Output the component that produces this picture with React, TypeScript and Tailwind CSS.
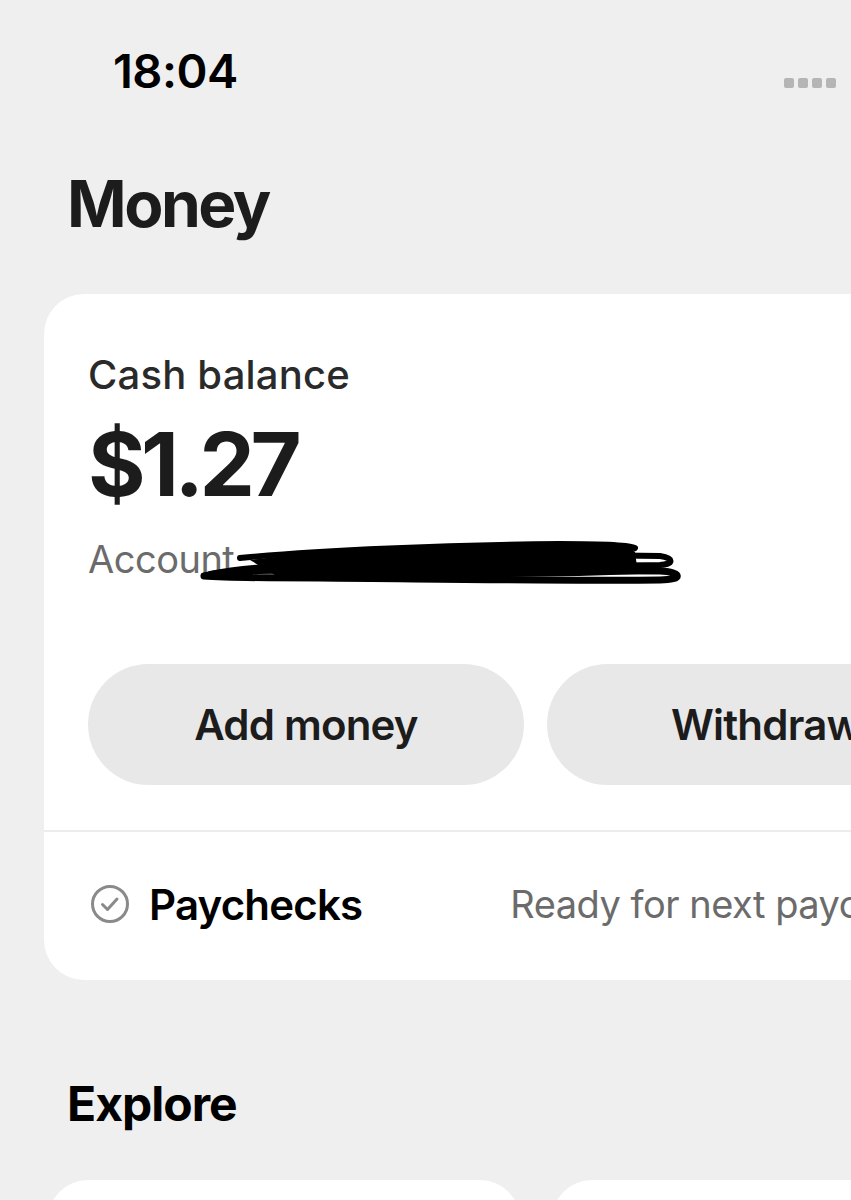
import React from "react";

function Scribble() {
  return (
    <svg
      className="absolute left-[190px] top-[530px]"
      width="500"
      height="60"
      viewBox="0 0 500 60"
      fill="none"
    >
      <path d="M60 30 C150 18 300 14 440 16 L445 22 L448 44 C360 48 200 48 90 48 Z" fill="#000" />
      <path d="M50 28 C130 20 260 15 370 14 C410 14 440 15 445 18" stroke="#000" strokeWidth="6" strokeLinecap="round" />
      <path d="M140 34 C250 26 360 24 470 26 C484 28 484 34 470 35 C400 36 320 36 260 38" stroke="#000" strokeWidth="6" strokeLinecap="round" />
      <path d="M14 46 C40 40 80 40 120 40 C250 40 380 40 470 41 C492 42 494 50 470 50 C380 51 250 49 130 48 C80 48 40 48 14 46" stroke="#000" strokeWidth="7" strokeLinecap="round" />
      <path d="M20 44 C60 36 110 34 160 33" stroke="#000" strokeWidth="6" strokeLinecap="round" />
      <path d="M120 26 C200 22 280 22 330 22" stroke="#000" strokeWidth="5" strokeLinecap="round" />
    </svg>
  );
}

export default function App() {
  return (
    <div
      className="relative w-[851px] h-[1200px] overflow-hidden bg-[#efefef] text-[#1f1f1f]"
      style={{ fontFamily: "Inter, 'Noto Sans', sans-serif" }}
    >
      {/* status bar */}
      <div className="flex items-center justify-between h-[50px] mt-[45px] pl-[113px] pr-[15px]">
        <span className="text-[47px] leading-none font-semibold tracking-[-0.5px] text-black">18:04</span>
        <div className="flex gap-[4px] items-center mt-[26px]">
          <span className="w-[10px] h-[10px] rounded-[2px] bg-[#b5b5b5]" />
          <span className="w-[10px] h-[10px] rounded-[2px] bg-[#b5b5b5]" />
          <span className="w-[10px] h-[10px] rounded-[2px] bg-[#b5b5b5]" />
          <span className="w-[10px] h-[10px] rounded-[2px] bg-[#b5b5b5]" />
        </div>
      </div>

      {/* title */}
      <h1 className="mt-[77px] ml-[67px] text-[64px] leading-none font-bold tracking-[-2.5px] text-[#1c1c1c]">
        Money
      </h1>

      {/* card */}
      <div className="mt-[58px] ml-[44px] w-[900px] h-[686px] bg-white rounded-[40px] flex flex-col">
        <div className="pl-[44px] pt-[61px]">
          <div className="text-[40px] leading-none font-medium text-[#2a2a2a] tracking-[0.2px]">Cash balance</div>
          <div className="mt-[25px] text-[88px] leading-none font-bold tracking-[-4.5px] text-[#1c1c1c]">$1.27</div>
          <div className="mt-[32px] text-[38px] leading-none text-[#6b6b6b] tracking-[-0.5px]">Account</div>
          <div className="mt-[86px] flex gap-[23px]">
            <div className="shrink-0 w-[436px] h-[121px] rounded-full bg-[#e8e8e8] flex items-center justify-center text-[42px] font-semibold tracking-[-0.8px] text-[#1c1c1c]">
              Add money
            </div>
            <div className="shrink-0 w-[436px] h-[121px] rounded-full bg-[#e8e8e8] flex items-center pl-[124px] text-[42px] font-semibold tracking-[-0.8px] text-[#1c1c1c]">
              Withdraw
            </div>
          </div>
        </div>
        <div className="mt-[45px] h-[2px] bg-[#ececec]" />
        <div className="flex items-center h-[148px] pl-[46px] pb-[4px]">
          <svg width="40" height="40" viewBox="0 0 40 40" fill="none" className="shrink-0">
            <circle cx="20" cy="20" r="17.5" stroke="#8a8a8a" strokeWidth="3" />
            <path d="M12.5 20.5 L17.5 25.5 L27 15" stroke="#8a8a8a" strokeWidth="3" strokeLinecap="round" strokeLinejoin="round" />
          </svg>
          <span className="ml-[19px] text-[42px] font-semibold tracking-[-0.8px] text-black whitespace-nowrap">Paychecks</span>
          <span className="ml-[148px] text-[38px] text-[#6b6b6b] tracking-[-0.5px] whitespace-nowrap">Ready for next paycheck</span>
        </div>
      </div>

      {/* explore */}
      <h2 className="mt-[100px] ml-[67px] text-[48px] leading-none font-bold tracking-[-1px] text-black">Explore</h2>
      <div className="mt-[52px] ml-[48px] flex gap-[32px]">
        <div className="shrink-0 w-[472px] h-[120px] bg-white rounded-[40px]" />
        <div className="shrink-0 w-[472px] h-[120px] bg-white rounded-[40px]" />
      </div>

      <Scribble />
    </div>
  );
}
